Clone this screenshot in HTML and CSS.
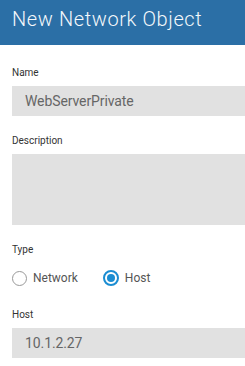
FILE: index.html
```html
<!DOCTYPE html>
<html lang="en">
<head>
    <meta charset="UTF-8">
    <title>New Network Object</title>
    <link rel="stylesheet" href="styles.css">
</head>
<body>
    <div class="dialog">
        <div class="dialog-header">
            <h1>New Network Object</h1>
        </div>

        <div class="dialog-body">
            <div class="field">
                <label class="field-label">Name</label>
                <div class="text-input">WebServerPrivate</div>
            </div>

            <div class="field">
                <label class="field-label">Description</label>
                <div class="text-area"></div>
            </div>

            <div class="field">
                <label class="field-label">Type</label>
                <div class="radio-group">
                    <span class="radio"><span class="radio-circle"></span>Network</span>
                    <span class="radio checked"><span class="radio-circle"></span>Host</span>
                </div>
            </div>

            <div class="field">
                <label class="field-label">Host</label>
                <div class="text-input">10.1.2.27</div>
            </div>
        </div>
    </div>
</body>
</html>
```

FILE: styles.css
```css
body {
    margin: 0;
    font-family: 'Roboto', 'Liberation Sans', sans-serif;
    background: #ffffff;
    color: #333;
}

.dialog {
    width: 100%;
}

.dialog-header {
    background-color: #2b6fa6;
    height: 45px;
    padding: 0 12px;
    display: flex;
    align-items: center;
}

.dialog-header h1 {
    margin: 0;
    margin-top: -7px;
    font-size: 20px;
    font-weight: 300;
    letter-spacing: 0.6px;
    color: #f4f8fb;
}

.dialog-body {
    padding: 22px 0 0 12px;
}

.field {
    margin-bottom: 19px;
}

.field-label {
    display: block;
    font-size: 10px;
    line-height: 12px;
    color: #333;
    margin-bottom: 7px;
}

.text-input {
    background-color: #e1e1e1;
    height: 30px;
    line-height: 30px;
    padding-left: 13px;
    font-size: 14px;
    letter-spacing: -0.1px;
    color: #666;
}

.text-area {
    background-color: #e1e1e1;
    height: 71px;
}

.radio-group {
    display: flex;
    gap: 25px;
    padding: 7px 0 4px;
}

.radio {
    display: flex;
    align-items: center;
    gap: 6px;
    font-size: 12px;
    color: #555;
}

.radio-circle {
    width: 13px;
    height: 13px;
    border: 1px solid #999;
    border-radius: 50%;
    position: relative;
}

.radio.checked .radio-circle {
    border: 2px solid #1b8dd2;
    width: 12px;
    height: 12px;
}

.radio.checked .radio-circle::after {
    content: '';
    position: absolute;
    top: 2px;
    left: 2px;
    width: 8px;
    height: 8px;
    border-radius: 50%;
    background: #1b8dd2;
}
```
